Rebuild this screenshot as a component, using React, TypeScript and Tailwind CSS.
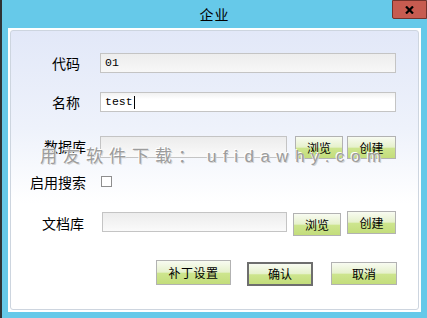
import React from "react";

const cjk = { fontFamily: '"Noto Sans CJK SC", "Noto Sans", sans-serif' };
const mono = { fontFamily: '"Liberation Mono", "DejaVu Sans Mono", monospace' };

function GreenButton({
  label,
  className,
  dark,
}: {
  label: string;
  className: string;
  dark?: boolean;
}) {
  return (
    <div
      className={`flex items-center justify-center text-[12px] leading-none text-black ${
        dark ? "border-2 border-[#6e6e6e]" : "border border-[#b2b2b2]"
      } bg-[linear-gradient(to_bottom,#f8fbf1_0%,#e6f1cc_48%,#cde58e_54%,#c3dd7b_100%)] ${className}`}
      style={cjk}
    >
      {label}
    </div>
  );
}

export default function App() {
  return (
    <div className="w-[427px] h-[318px] bg-[#66c9e9] border-l-2 border-[#2e3235] overflow-hidden flex flex-col">
      {/* title bar */}
      <div className="relative h-[28px] flex items-center justify-center">
        <span className="text-[14px] tracking-[1px] text-black leading-none -mt-[1px]" style={cjk}>
          企业
        </span>
        <div className="absolute right-0 top-0 w-[35px] h-[19px] bg-[#c75b50] border border-[#74322c] rounded-bl-[2px] flex items-center justify-center">
          <svg width="9" height="8" viewBox="0 0 9 8">
            <path d="M1 0.5 L8 7.5 M8 0.5 L1 7.5" stroke="#000" strokeWidth="2.2" />
          </svg>
        </div>
      </div>

      {/* panel */}
      <div className="ml-[6px] w-[413px] h-[284px] bg-white p-[2px]">
        <div className="relative w-full h-full border border-[#cdd5df] rounded-[3px] bg-[linear-gradient(to_bottom,#e2e8f8_0%,#eef2fb_35%,#ffffff_62%,#ffffff_100%)] flex flex-col pt-[22px]">
          {/* 代码 */}
          <div className="flex items-center h-[20px]">
            <div className="w-[75px] pr-[6px] text-right text-[14px] leading-none text-black" style={cjk}>
              代码
            </div>
            <div
              className="ml-[14px] w-[296px] h-[20px] border border-[#c4c4c4] bg-[linear-gradient(to_bottom,#ededed,#f7f7f7)] flex items-center pl-[4px] text-[11.5px] text-black"
              style={mono}
            >
              01
            </div>
          </div>

          {/* 名称 */}
          <div className="flex items-center h-[20px] mt-[19px]">
            <div className="w-[75px] pr-[6px] text-right text-[14px] leading-none text-black" style={cjk}>
              名称
            </div>
            <div
              className="ml-[14px] w-[296px] h-[20px] border border-[#c4c4c4] bg-[linear-gradient(to_bottom,#f1f1f1,#ffffff_35%)] flex items-center pl-[4px] text-[11.5px] text-black"
              style={mono}
            >
              test
              <span className="inline-block w-px h-[13px] bg-black ml-px" />
            </div>
          </div>

          {/* 数据库 */}
          <div className="flex items-start h-[23px] mt-[24px]">
            <div className="w-[75px] h-[22px] flex items-center justify-end text-[14px] leading-none text-black -mt-[1px]" style={cjk}>
              数据库
            </div>
            <div className="ml-[14px] w-[187px] h-[22px] border border-[#c4c4c4] bg-[linear-gradient(to_bottom,#ececec,#fafafa)]" />
            <GreenButton label="浏览" className="ml-[8px] w-[48px] h-[23px]" />
            <GreenButton label="创建" className="ml-[4px] w-[49px] h-[23px]" />
          </div>

          {/* 启用搜索 */}
          <div className="flex items-center h-[13px] mt-[16px]">
            <div className="w-[75px] text-right text-[14px] leading-none text-black" style={cjk}>
              启用搜索
            </div>
            <div className="ml-[15px] w-[11px] h-[11px] border border-[#8e8e8e] bg-white" />
          </div>

          {/* 文档库 */}
          <div className="flex items-start h-[25px] mt-[23px]">
            <div className="w-[75px] pr-[2px] h-[22px] flex items-center justify-end text-[14px] leading-none text-black mt-[1px]" style={cjk}>
              文档库
            </div>
            <div className="ml-[16px] mt-[1px] w-[185px] h-[20px] border border-[#c4c4c4] bg-[linear-gradient(to_bottom,#ececec,#fafafa)]" />
            <GreenButton label="浏览" className="ml-[6px] mt-[2px] w-[48px] h-[23px]" />
            <GreenButton label="创建" className="ml-[6px] w-[49px] h-[23px]" />
          </div>

          {/* bottom buttons */}
          <div className="flex items-start h-[26px] mt-[24px] pl-[145px]">
            <GreenButton label="补丁设置" className="w-[75px] h-[25px] tracking-[0.5px]" />
            <GreenButton label="确认" className="ml-[16px] mt-[2px] w-[66px] h-[24px]" dark />
            <GreenButton label="取消" className="ml-[18px] mt-[2px] w-[66px] h-[23px]" />
          </div>

          {/* watermark overlay */}
          <div
            className="absolute left-[29px] top-[117px] whitespace-nowrap text-[17px] leading-none tracking-[6px] text-[#9c9c9c] pointer-events-none [text-shadow:-1px_-1px_0_#ffffff,1px_1px_0_#d4d4d4]"
            style={{ fontFamily: '"Liberation Sans", "Noto Sans CJK SC", sans-serif' }}
          >
            用友软件下载：<span className="ml-[6px] tracking-[6.5px]">ufidawhy.com</span>
          </div>
        </div>
      </div>
    </div>
  );
}
